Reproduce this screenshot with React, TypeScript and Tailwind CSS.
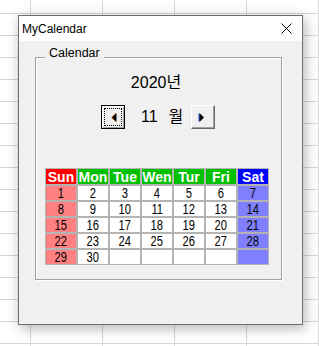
const DAYS = ["Sun", "Mon", "Tue", "Wen", "Tur", "Fri", "Sat"];

const WEEKS: (number | null)[][] = [
  [1, 2, 3, 4, 5, 6, 7],
  [8, 9, 10, 11, 12, 13, 14],
  [15, 16, 17, 18, 19, 20, 21],
  [22, 23, 24, 25, 26, 27, 28],
  [29, 30, null, null, null, null, null],
];

const HEAD_BG = ["bg-[#ff0000]", "bg-[#00c000]", "bg-[#00c000]", "bg-[#00c000]", "bg-[#00c000]", "bg-[#00c000]", "bg-[#0000ff]"];
const CELL_BG = ["bg-[#ff8080]", "bg-white", "bg-white", "bg-white", "bg-white", "bg-white", "bg-[#8080ff]"];

function Arrow({ dir }: { dir: "left" | "right" }) {
  return (
    <svg width="7" height="9" viewBox="0 0 7 9">
      {dir === "left" ? (
        <>
          <polygon points="5.5,0 5.5,9 1,4.5" fill="#e08a2a" />
          <polygon points="6.5,0 6.5,9 2,4.5" fill="#000" />
        </>
      ) : (
        <>
          <polygon points="0.5,0 0.5,9 5,4.5" fill="#2a5fd0" />
          <polygon points="1.5,0 1.5,9 6,4.5" fill="#000" />
        </>
      )}
    </svg>
  );
}

export default function App() {
  return (
    <div className="relative h-[346px] w-[319px] overflow-hidden bg-white bg-[linear-gradient(to_right,#d6d6d6_1px,transparent_1px),linear-gradient(to_bottom,#d6d6d6_1px,transparent_1px)] bg-size-[72px_22px] bg-position-[30px_13px] pl-[18px] pt-[15px] font-['Liberation_Sans','Noto_Sans_CJK_KR',sans-serif] text-black">
      <div className="flex h-[310px] w-[285px] flex-col border border-[#6e6e6e] shadow-[2px_3px_12px_rgba(0,0,0,0.3)]">
        {/* title bar */}
        <div className="flex h-[25px] items-center justify-between bg-white pl-[3px] pr-[10px]">
          <span className="text-[12px] leading-none">MyCalendar</span>
          <svg width="11" height="11" viewBox="0 0 11 11">
            <path d="M0.5 0.5 L10.5 10.5 M10.5 0.5 L0.5 10.5" stroke="#000" strokeWidth="1" />
          </svg>
        </div>

        <div className="flex-1 bg-[#f0f0f0] pl-4 pt-4">
          {/* group box */}
          <div className="relative h-[223px] w-[247px] border border-[#a0a0a0] shadow-[1px_1px_0_#fff,inset_1px_1px_0_#fff]">
            <span className="absolute left-[9px] top-[-12px] bg-[#f0f0f0] px-[4px] text-[12.5px] leading-[15px]">
              Calendar
            </span>

            <div className="pl-[9px] pt-[15px]">
              <div className="w-[222px] text-center text-[16px] leading-[20px]">2020년</div>

              <div className="mt-[12px] flex items-center pl-[56px]">
                <button className="relative flex h-6 w-6 items-center justify-center border border-black bg-[#f0f0f0] shadow-[inset_1px_1px_0_#fff,inset_-1px_-1px_0_#a0a0a0]">
                  <span className="absolute inset-[2px] border border-dotted border-black" />
                  <Arrow dir="left" />
                </button>
                <span className="ml-4 flex w-[39px] items-center gap-[11px] text-[16px] leading-[20px]">
                  <span>11</span>
                  <span>월</span>
                </span>
                <button className="ml-[11px] flex h-6 w-6 items-center justify-center border-b border-l border-r border-t border-b-[#696969] border-l-white border-r-[#696969] border-t-white bg-[#f0f0f0] pr-[3px] shadow-[inset_-1px_-1px_0_#a0a0a0]">
                  <Arrow dir="right" />
                </button>
              </div>

              <div className="mt-[39px] grid w-[224px] grid-cols-[repeat(7,30px)] grid-rows-[15px_repeat(5,14px)] gap-[2px] bg-[#b4b4b4] p-px">
                {DAYS.map((d, i) => (
                  <div
                    key={d}
                    className={`flex items-center justify-center text-[14px] font-bold leading-none text-white ${HEAD_BG[i]}`}
                  >
                    {d}
                  </div>
                ))}
                {WEEKS.flatMap((week, r) =>
                  week.map((day, c) => (
                    <div
                      key={`${r}-${c}`}
                      className={`flex items-center justify-center text-[14px] leading-none ${CELL_BG[c]}`}
                    >
                      <span className="inline-block scale-x-[0.8]">{day ?? ""}</span>
                    </div>
                  ))
                )}
              </div>
            </div>
          </div>
        </div>
      </div>
    </div>
  );
}
